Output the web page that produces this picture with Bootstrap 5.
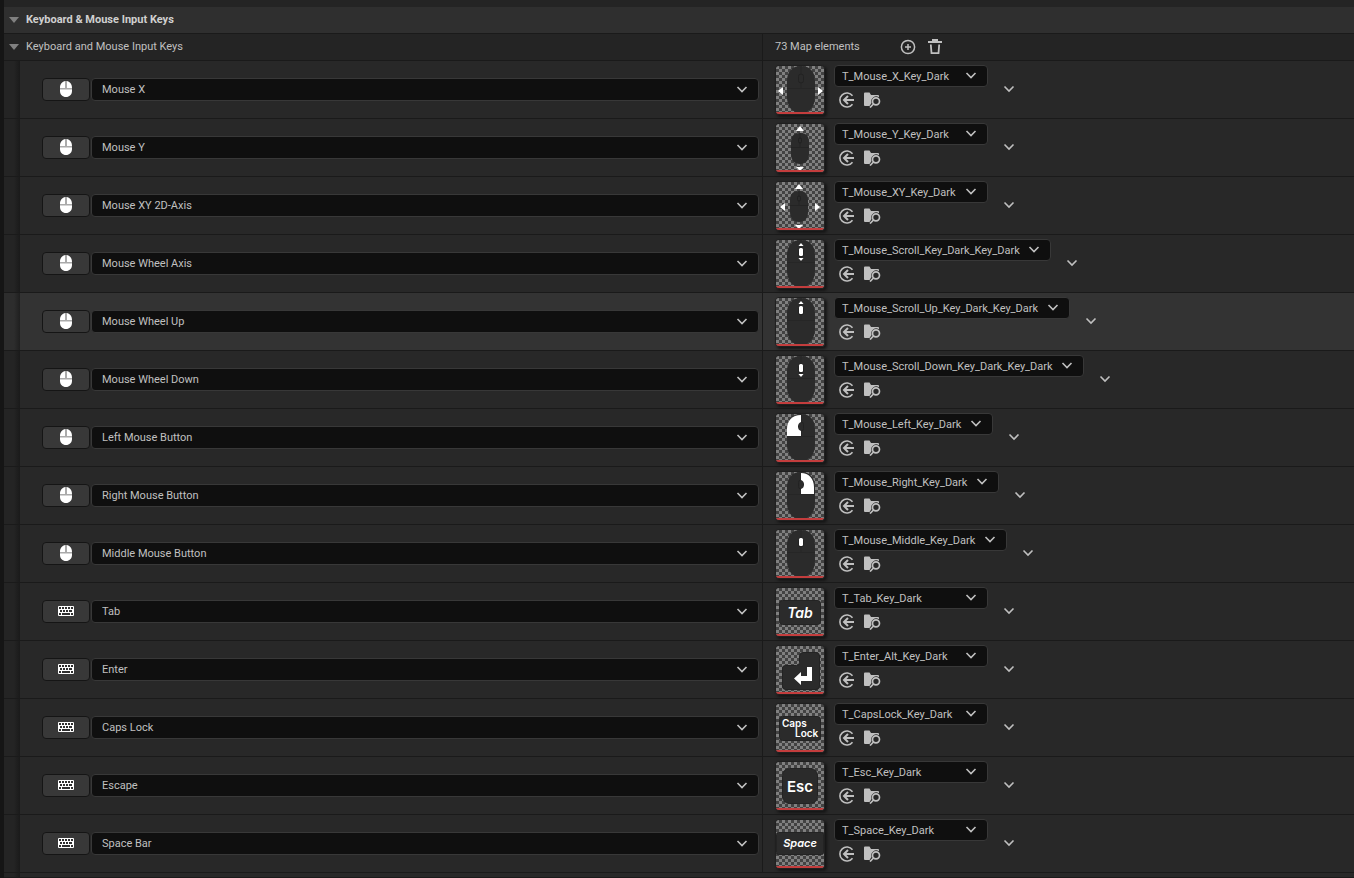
<!DOCTYPE html>
<html lang="en">
<head>
<meta charset="utf-8">
<meta name="viewport" content="width=device-width, initial-scale=1">
<title>Input Keys</title>
<link href="https://cdn.jsdelivr.net/npm/bootstrap@5.3.0/dist/css/bootstrap.min.css" rel="stylesheet">
<style>
  body { background: #242424; color: #c0c0c0; font: 11px/16px Roboto, sans-serif; border-left: 4px solid #151515; }
  .top-gap { height: 7px; }
  .section-bar { height: 27px; background: #2f2f2f; border-bottom: 1px solid #1a1a1a; color: #d0d0d0; }
  .split { display: grid; grid-template-columns: 758fr 592fr; }
  .split > :last-child { border-left: 1px solid #1a1a1a; }
  .map-bar { height: 27px; border-bottom: 1px solid #1a1a1a; }
  .toggle, .tool { border: 0; background: none; padding: 0; color: #c0c0c0; line-height: 0; }
  .toggle { color: #808080; width: 22px; }
  .entry { height: 58px; border-bottom: 1px solid #1a1a1a; background: #282828; }
  .entry.hovered { background: #333; }
  .indent { width: 16px; background: linear-gradient(90deg, #242424 0 10px, #1a1a1a); }
  .hovered .indent { background: linear-gradient(90deg, #2d2d2d 0 10px, #1f1f1f); }
  .key-cell { padding: 0 3px 0 22px; gap: 1px; }
  .key-btn { width: 48px; height: 23px; padding: 0 0 2px; line-height: 0; background: #383838; border: 1px solid #151515; border-radius: 4px; color: #fff; }
  .combo { appearance: none; height: 22px; margin: 0; border: 1px solid #383838; border-radius: 4px; color: #c0c0c0; font: inherit; outline: 0;
    background: #0f0f0f url("data:image/svg+xml,%3Csvg xmlns='http://www.w3.org/2000/svg' width='12' height='10'%3E%3Cpath d='M1.500 2l4.500 4.500 4.500-4.500' fill='none' stroke='%23c0c0c0' stroke-width='1.600'/%3E%3C/svg%3E") no-repeat right 10px center; }
  .key-combo { height: 23px; padding: 0 30px 0 10px; }
  .asset-combo { min-width: 154px; padding: 1px 30px 0 7px; }
  .value-cell { padding: 4px 12px 0; }
  .thumb { width: 50px; height: 50px; border: 1px solid #202020; border-radius: 4px; box-shadow: 2px 2px 3px #151515; overflow: hidden; }
  .asset { margin-left: 9px; }
  .tools { gap: 9px; padding: 5px 0 0 4px; }
  .more { margin: 0 0 6px 15px; }
  svg { display: block; }
  .key-btn svg { margin: auto; }
</style>
</head>
<body class="vh-100 overflow-hidden d-flex flex-column">
<svg width="0" height="0" class="position-absolute" aria-hidden="true">
  <defs>
    <pattern id="checks" width="6" height="6" patternUnits="userSpaceOnUse">
      <path fill="#424242" d="M0 0h6v6H0z"/><path fill="#808080" d="M0 0h3v3H0zM3 3h3v3H3z"/>
    </pattern>
    <symbol id="tri" viewBox="0 0 10 6"><path fill="currentColor" d="M0 0h10L5 6z"/></symbol>
    <symbol id="chev" viewBox="0 0 12 8"><path d="M1.500 1.500l4.500 4.500 4.500-4.500" fill="none" stroke="currentColor" stroke-width="1.600"/></symbol>
    <symbol id="mouse" viewBox="0 0 12 16">
      <path fill="#fff" d="M0 8h12v2c0 3.500-2.500 6-6 6s-6-2.500-6-6zM0 7C0 3 2 .5 5.500 0v7zM6.500 0C10 .5 12 3 12 7H6.500z"/>
      <path fill="#aaa" d="M0 7h12v1.500H0zM5 0h2v7H5z"/>
    </symbol>
    <symbol id="keyboard" viewBox="0 0 16 10">
      <rect width="16" height="10" rx="1" fill="#fff"/>
      <path fill="#303030" d="M1 1h2v2H1zM4 1h2v2H4zM7 1h2v2H7zM10 1h2v2h-2zM13 1h2v2h-2zM2 4h2v2H2zM5 4h2v2H5zM8 4h2v2H8zM11 4h3v2h-3zM1 7h2v2H1zM4 7h8v2H4zM13 7h2v2h-2z"/>
    </symbol>
    <symbol id="add" viewBox="0 0 16 16"><g fill="none" stroke="currentColor" stroke-width="1.500"><circle cx="8" cy="8" r="6.600"/><path d="M8 5v6M5 8h6"/></g></symbol>
    <symbol id="trash" viewBox="0 0 14 16"><path fill="currentColor" d="M4 0h6v2H4zM0 2h14v2H0z"/><path d="M2.800 5.500l.7 8.700h7l.7-8.700" fill="none" stroke="currentColor" stroke-width="1.800"/></symbol>
    <symbol id="use" viewBox="0 0 16 16"><g fill="none" stroke="currentColor"><path d="M14 3.800A7 7 0 1 0 14 12.200" stroke-width="1.600"/><path d="M15.500 8H5.500M9.500 4L5.500 8l4 4" stroke-width="2"/></g></symbol>
    <symbol id="browse" viewBox="0 0 17 16">
      <path fill="currentColor" d="M0 1.500Q0 .5 1 .5h4.500L7 3h7q1 0 1 1v1.200A5 5 0 0 0 7.500 11L5.500 14H1q-1 0-1-1z"/>
      <g fill="none" stroke="currentColor" stroke-width="1.700"><circle cx="12" cy="9.300" r="3.500"/><path d="M9.500 12l-3.500 3.500"/></g>
    </symbol>
    <symbol id="body-big" viewBox="0 0 48 48"><path fill="#2b2b2b" d="M11 15C11 6 16 0 25 0s14 6 14 15v16c0 9-5 16-14 16S11 40 11 31z"/><path d="M11 22.500h28M25 0v9M25 16v6" stroke="#262626" fill="none"/><rect x="22.500" y="8" width="5" height="9" rx="2.500" stroke="#222" fill="#2b2b2b"/></symbol>
    <symbol id="body-small" viewBox="0 0 48 48"><path fill="#2b2b2b" d="M15 18c0-6 3-9 9-9s9 3 9 9v12c0 6-3 10-9 10s-9-4-9-10z"/><path d="M15 23.500h18M24 9v5M24 19v4" stroke="#242424" fill="none"/><rect x="22.500" y="14" width="3" height="5" rx="1.500" stroke="#202020" fill="#2b2b2b"/></symbol>
  </defs>
</svg>

<div class="top-gap flex-shrink-0"></div>
<header class="section-bar d-flex align-items-center flex-shrink-0">
  <button class="toggle d-flex ps-1" aria-label="Collapse section"><svg width="12" height="6"><use href="#tri"/></svg></button>
  <span class="fw-bold">Keyboard &amp; Mouse Input Keys</span>
</header>
<div class="map-bar split flex-shrink-0">
  <div class="d-flex align-items-center">
    <button class="toggle d-flex ps-1" aria-label="Collapse map"><svg width="12" height="6"><use href="#tri"/></svg></button>
    <span>Keyboard and Mouse Input Keys</span>
  </div>
  <div class="d-flex align-items-center ps-2">
    <span class="ps-1">73 Map elements</span>
    <button class="tool ms-4 ps-3" aria-label="Add element"><svg width="16" height="16"><use href="#add"/></svg></button>
    <button class="tool ms-2 ps-1" aria-label="Empty map"><svg width="14" height="16"><use href="#trash"/></svg></button>
  </div>
</div>
<main id="entries" class="flex-shrink-0"></main>
<div class="entry flex-grow-1 d-flex"><div class="indent"></div></div>

<script src="https://cdn.jsdelivr.net/npm/bootstrap@5.3.0/dist/js/bootstrap.bundle.min.js"></script>
<script>
  const big = '<use href="#body-big"/>';
  const small = '<use href="#body-small"/>';
  const white = d => `<path fill="#fff" d="${d}"/>`;
  const wheel = '<rect x="23" y="8" width="4" height="8" rx="1.500" fill="#fff"/>';
  const up = white('M25 3l2.500 3h-5z'), down = white('M25 21l2.500-3h-5z');
  const cap = (x, y, w, h, r) => `<rect x="${x}" y="${y}" width="${w}" height="${h}" rx="${r}" fill="#2b2b2b" stroke="#232323"/>`;
  const label = (x, y, size, text, extra = '') => `<text x="${x}" y="${y}" font-size="${size}" fill="#fff" font-family="Inter, sans-serif" font-weight="600" ${extra}>${text}</text>`;

  // [key, icon, texture, thumbnail drawing]
  const entries = [
    ['Mouse X', 'mouse', 'T_Mouse_X_Key_Dark', big + white('M2 25l5-4v8zM47 25l-5-4v8z')],
    ['Mouse Y', 'mouse', 'T_Mouse_Y_Key_Dark', small + white('M24 2l4 5h-8zM24 47l4-4h-8z')],
    ['Mouse XY 2D-Axis', 'mouse', 'T_Mouse_XY_Key_Dark', '<g transform="translate(-1 0)">' + small + white('M24 2l4 5h-8zM24 47l4-4h-8zM5 25l5-4v8zM45 25l-5-4v8z') + '</g>'],
    ['Mouse Wheel Axis', 'mouse', 'T_Mouse_Scroll_Key_Dark_Key_Dark', big + wheel + up + down],
    ['Mouse Wheel Up', 'mouse', 'T_Mouse_Scroll_Up_Key_Dark_Key_Dark', big + wheel + up],
    ['Mouse Wheel Down', 'mouse', 'T_Mouse_Scroll_Down_Key_Dark_Key_Dark', big + wheel + down],
    ['Left Mouse Button', 'mouse', 'T_Mouse_Left_Key_Dark', big + white('M25 1v7q-3 1-3 4.500t3 4.500v5H11v-7C11 7 16 1 25 1z')],
    ['Right Mouse Button', 'mouse', 'T_Mouse_Right_Key_Dark', big + white('M25 1v7q3 1 3 4.500t-3 4.500v5h13v-7c0-8-5-14-13-14z')],
    ['Middle Mouse Button', 'mouse', 'T_Mouse_Middle_Key_Dark', big + wheel],
    ['Tab', 'keyboard', 'T_Tab_Key_Dark', cap(3.5, 12.5, 41, 24, 3) + label(24, 30, 14, 'Tab', 'text-anchor="middle" font-style="italic"')],
    ['Enter', 'keyboard', 'T_Enter_Alt_Key_Dark', '<path fill="#2b2b2b" stroke="#232323" d="M27 6.500h13q3.500 0 3.500 3.500v30q0 3.500-3.500 3.500H9.500q-3 0-3-3.500V22q0-2.500 3-2.500h11q3 0 3-3V10q0-3.500 3.500-3.500z"/>' + white('M31 21h5v14H25v4l-7-6.500 7-6.500v4h6z')],
    ['Caps Lock', 'keyboard', 'T_CapsLock_Key_Dark', cap(3.5, 12.5, 41, 24, 3) + label(6, 23, 10, 'Caps') + label(19, 33, 10, 'Lock')],
    ['Escape', 'keyboard', 'T_Esc_Key_Dark', cap(6.5, 6.5, 35, 35, 7) + label(24, 30, 15, 'Esc', 'text-anchor="middle"')],
    ['Space Bar', 'keyboard', 'T_Space_Key_Dark', cap(0.5, 12.5, 47, 22, 2) + label(24, 27, 11, 'Space', 'text-anchor="middle" font-style="italic"')]
  ];

  document.getElementById('entries').innerHTML = entries.map(([key, icon, texture, art]) => `
    <div class="entry split ${key === 'Mouse Wheel Up' ? 'hovered' : ''}">
      <div class="d-flex">
        <div class="indent flex-shrink-0"></div>
        <div class="key-cell d-flex align-items-center flex-grow-1">
          <button class="key-btn flex-shrink-0" aria-label="Listen for ${key}"><svg width="16" height="16"><use href="#${icon}"/></svg></button>
          <select class="key-combo combo flex-grow-1" aria-label="Key"><option>${key}</option></select>
        </div>
      </div>
      <div class="value-cell d-flex">
        <div class="thumb flex-shrink-0"><svg width="48" height="48" viewBox="0 0 48 48"><path fill="url(#checks)" d="M0 0h48v48H0z"/>${art}<path fill="#c33d3d" d="M0 46h48v2H0z"/></svg></div>
        <div class="asset">
          <select class="asset-combo combo d-block" aria-label="Texture for ${key}"><option>${texture}</option></select>
          <div class="tools d-flex">
            <button class="tool" aria-label="Use selected asset"><svg width="17" height="16"><use href="#use"/></svg></button>
            <button class="tool" aria-label="Browse to asset"><svg width="17" height="16"><use href="#browse"/></svg></button>
          </div>
        </div>
        <button class="tool more" aria-label="Element options"><svg width="12" height="8"><use href="#chev"/></svg></button>
      </div>
    </div>`).join('');
</script>
</body>
</html>
